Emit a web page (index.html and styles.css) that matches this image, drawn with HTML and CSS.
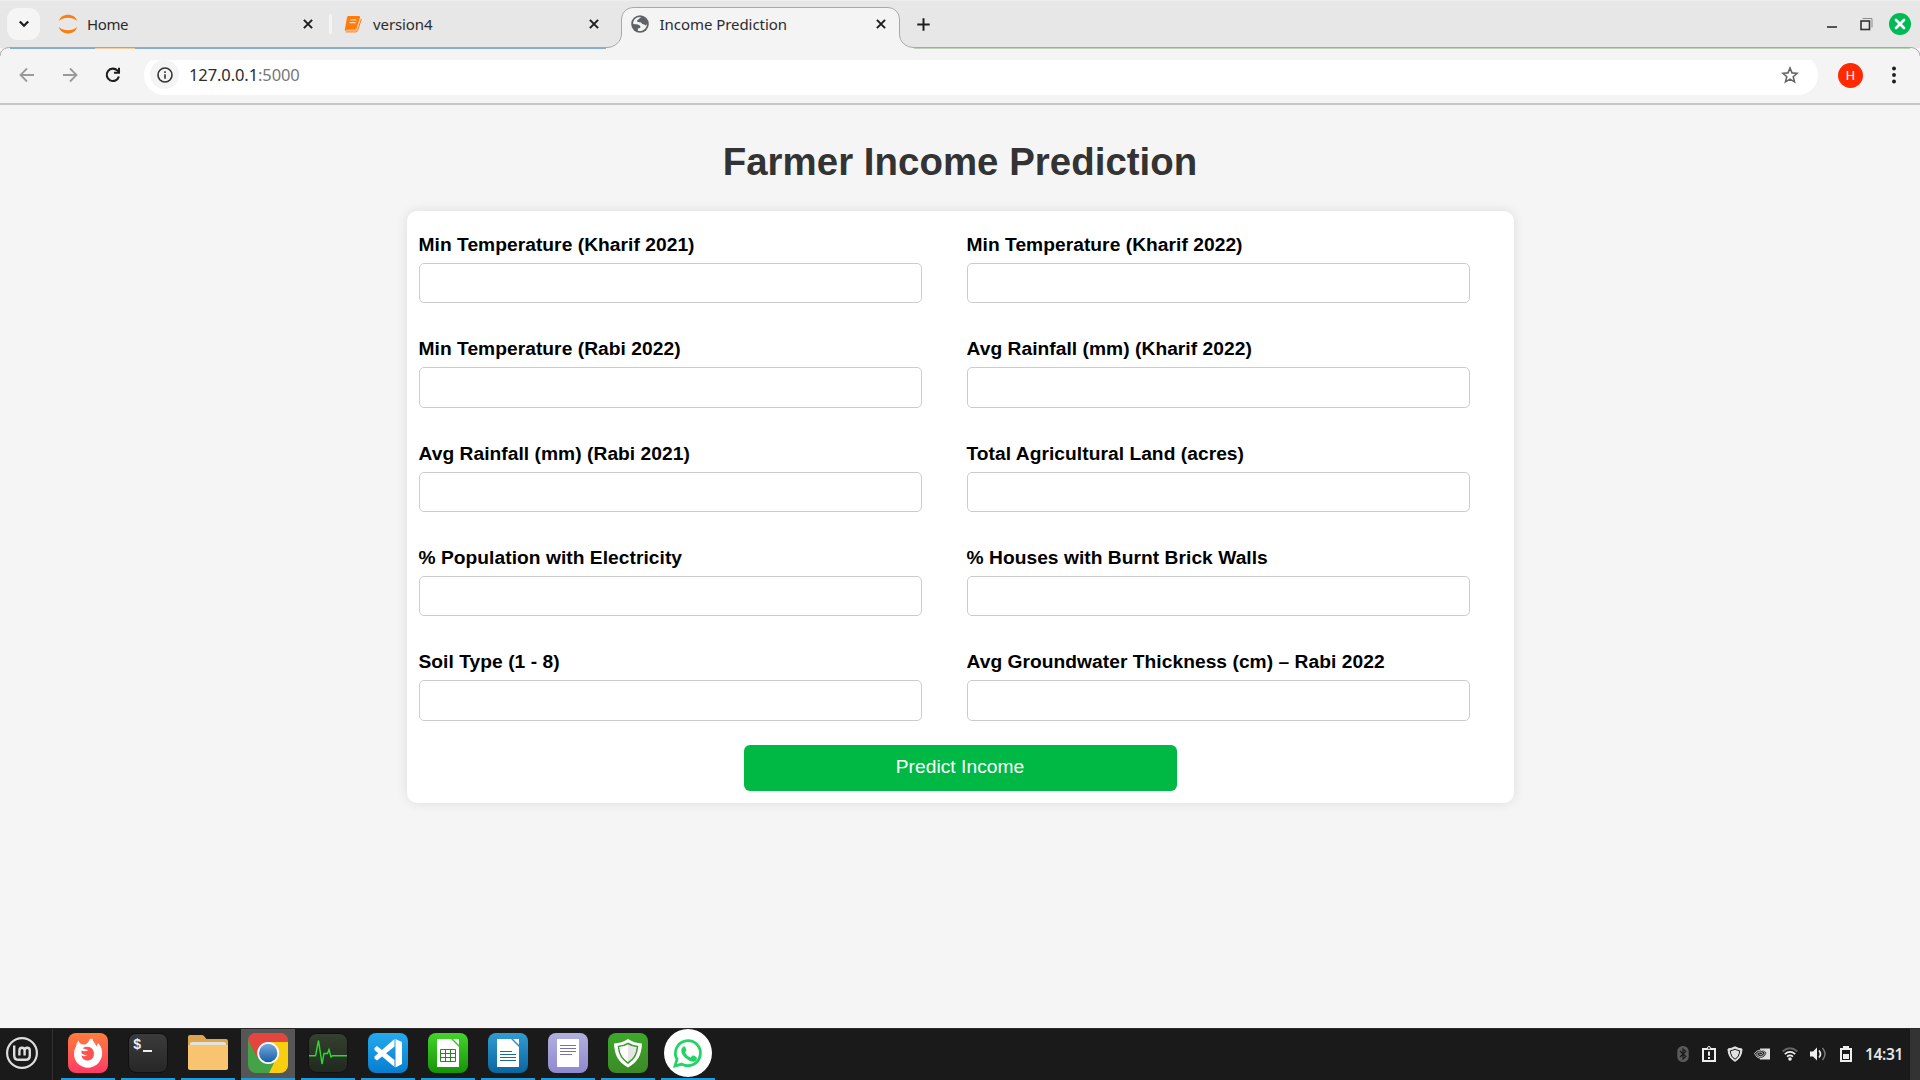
FILE: index.html
```html
<!DOCTYPE html>
<html lang="en">
<head>
<meta charset="utf-8">
<title>Income Prediction</title>
<link rel="stylesheet" href="styles.css">
</head>
<body>
<div class="desktop">
  <header class="tabstrip">
    <svg class="strip-outline" width="1920" height="60" viewBox="0 0 1920 60" fill="none">
      <path d="M0 56C.5 50 4 47.5 11 47.5H607C615 47.5 621.500 41 621.500 34V20C621.500 12 627 7.500 634 7.500H887C895 7.500 899.500 13 899.500 20V34C899.500 42 906 47.500 914 47.500H1910C1916 47.500 1919.500 51 1920 56V60H0Z" fill="#f4f4f4"/>
      <path d="M10 48.500H606" stroke="#86aec9"/>
      <path d="M95 48.500H135" stroke="#f0cfa0"/>
      <path d="M914 48.500H1910" stroke="#bdd0b8"/>
      <path d="M0 56C.5 50 4 47.500 11 47.500H607C615 47.500 621.500 41 621.500 34V20C621.500 12 627 7.500 634 7.500H887C895 7.500 899.500 13 899.500 20V34C899.500 42 906 47.500 914 47.500H1910C1916 47.500 1919.500 51 1920 56" stroke="#a8a8a8"/>
    </svg>
    <button class="tab-search"><svg width="12" height="8" viewBox="0 0 12 8"><path d="M1.800 1.500 6 5.700 10.200 1.500" fill="none" stroke="#1e1e1e" stroke-width="2.300"/></svg></button>
    <div class="tab tab-home">
      <svg width="20" height="20" viewBox="0 0 20 20" fill="#ff7b0a"><path d="M.8 7C3-1.500 17-1.500 19.200 7C14 2.700 6 2.700 .8 7Z"/><path d="M.8 13C3 21.500 17 21.500 19.200 13C14 17.300 6 17.300 .8 13Z"/></svg>
      <span class="tab-title title-home">Home</span>
      <svg class="close" width="10" height="10" viewBox="0 0 10 10"><path d="M.9.9 9.100 9.100M9.100.9.9 9.100" stroke="#1e1e1e" stroke-width="2"/></svg>
    </div>
    <i class="tab-divider"></i>
    <div class="tab tab-notebook">
      <svg width="18" height="18" viewBox="0 0 18 18"><path d="M4.200 1H15q1.400 0 1 1.500L13 14.500q-.4 1.500-2 1.500H2Q.4 16 .9 14L3 2.500Q3.200 1 4.200 1Z" fill="#ff7b0a"/><path d="M6.300 4.800h6M5.600 7.600h6" stroke="#ffd9b8" stroke-width="1.300"/><path d="M2 15.200h9.300q1.100 0 1.500-1.400L16.300 3" fill="none" stroke="#ffd1a5" stroke-width="1"/><path d="M1.800 16.900h10q1.500 0 1.900-1.500L17.300 4" fill="none" stroke="#ff7b0a"/></svg>
      <span class="tab-title title-notebook">version4</span>
      <svg class="close" width="10" height="10" viewBox="0 0 10 10"><path d="M.9.9 9.100 9.100M9.100.9.9 9.100" stroke="#1e1e1e" stroke-width="2"/></svg>
    </div>
    <div class="tab tab-active">
      <svg width="18" height="18" viewBox="0 0 18 18"><circle cx="9" cy="9" r="8.800" fill="#5f6368"/><path d="M10.600 2.200C8.500 2.300 8.400 4 7.400 4.500C6 5 5.700 5.700 6.500 6.700C7.300 7.600 10 6.500 10.700 8.200C11 9.500 13 8.700 14.500 10.500C15.500 9.800 16 9 16 8.500C16.200 13.500 11.500 17 7 15.800L6.800 13.600C8.800 13.500 9.800 12.700 9.300 11.300C8.600 9.600 6 9 2.200 8.900C1.800 4.500 6 1.200 10.600 2.200Z" fill="#f4f4f4"/></svg>
      <span class="tab-title title-active">Income Prediction</span>
      <svg class="close" width="10" height="10" viewBox="0 0 10 10"><path d="M.9.9 9.100 9.100M9.100.9.9 9.100" stroke="#1e1e1e" stroke-width="2"/></svg>
    </div>
    <svg class="new-tab" width="13" height="13" viewBox="0 0 13 13"><path d="M6.500.3V12.700M.3 6.500H12.700" stroke="#1e1e1e" stroke-width="2"/></svg>
    <div class="window-controls">
      <svg width="10" height="24" viewBox="0 0 10 24"><path d="M0 15h10" stroke="#555" stroke-width="2"/></svg>
      <svg width="13" height="24" viewBox="0 0 13 24" fill="none"><path d="M2.500 6.500h9.500v9" stroke="#8b8b8b"/><rect x="1" y="9" width="8.500" height="8.500" stroke="#333" stroke-width="1.600"/></svg>
      <svg width="22" height="22" viewBox="0 0 22 22"><circle cx="11" cy="11" r="11" fill="#00bb55"/><path d="M7 7l8 8M15 7l-8 8" stroke="#fff" stroke-width="2.700" stroke-linecap="round"/></svg>
    </div>
  </header>

  <nav class="toolbar">
    <svg class="nav-back" width="16" height="16" viewBox="0 0 16 16" fill="none" stroke="#9a9a9a" stroke-width="1.800"><path d="M15 8H2M8 1.500 1.500 8 8 14.500"/></svg>
    <svg class="nav-forward" width="16" height="16" viewBox="0 0 16 16" fill="none" stroke="#9a9a9a" stroke-width="1.800"><path d="M1 8H14M8 1.500 14.500 8 8 14.500"/></svg>
    <svg class="nav-reload" width="16" height="16" viewBox="0 0 16 16"><path d="M13.900 9.500A6.200 6.200 0 1 1 12.500 3.600L14.500 5.600" fill="none" stroke="#1e1e1e" stroke-width="2.100"/><path d="M15 .7V6.700H9V4.700H13V.7Z" fill="#1e1e1e"/></svg>
    <div class="omnibox">
      <span class="site-info"><svg width="16" height="16" viewBox="0 0 16 16"><circle cx="8" cy="8" r="7" fill="none" stroke="#333" stroke-width="1.600"/><path d="M8 7.200V11.700M8 4.200V5.900" stroke="#333" stroke-width="1.600"/></svg></span>
      <span class="url">127.0.0.1<span class="port">:5000</span></span>
      <svg class="bookmark" width="18" height="18" viewBox="0 0 18 18"><path d="M9 2 11 6.900 16.200 7.300 12.200 10.700 13.500 15.900 9 13.100 4.500 15.900 5.800 10.700 1.800 7.300 7 6.900Z" fill="none" stroke="#666" stroke-width="1.600"/></svg>
    </div>
    <span class="avatar">H</span>
    <svg class="kebab" width="4" height="18" viewBox="0 0 4 18" fill="#1e1e1e"><circle cx="2" cy="2.500" r="1.950"/><circle cx="2" cy="9" r="1.950"/><circle cx="2" cy="15.500" r="1.950"/></svg>
  </nav>

  <main class="page">
    <h1 class="page-title">Farmer Income Prediction</h1>
    <form class="card">
      <div class="fields">
        <div class="field"><label for="f1">Min Temperature (Kharif 2021)</label><input id="f1" type="text"></div>
        <div class="field"><label for="f2">Min Temperature (Kharif 2022)</label><input id="f2" type="text"></div>
        <div class="field"><label for="f3">Min Temperature (Rabi 2022)</label><input id="f3" type="text"></div>
        <div class="field"><label for="f4">Avg Rainfall (mm) (Kharif 2022)</label><input id="f4" type="text"></div>
        <div class="field"><label for="f5">Avg Rainfall (mm) (Rabi 2021)</label><input id="f5" type="text"></div>
        <div class="field"><label for="f6">Total Agricultural Land (acres)</label><input id="f6" type="text"></div>
        <div class="field"><label for="f7">% Population with Electricity</label><input id="f7" type="text"></div>
        <div class="field"><label for="f8">% Houses with Burnt Brick Walls</label><input id="f8" type="text"></div>
        <div class="field"><label for="f9">Soil Type (1 - 8)</label><input id="f9" type="text"></div>
        <div class="field"><label for="f10">Avg Groundwater Thickness (cm) – Rabi 2022</label><input id="f10" type="text"></div>
      </div>
      <button class="submit" type="button">Predict Income</button>
    </form>
  </main>

  <footer class="taskbar">
    <div class="start">
      <svg width="32" height="32" viewBox="0 0 32 32" fill="none" stroke="#ddd"><circle cx="16" cy="16" r="14.900" stroke-width="2.200"/><path d="M8.200 8.500V18.500Q8.200 22.800 12.500 22.800H19.500Q23.800 22.800 23.800 18.500V13.500Q23.800 10.700 21.200 10.700T18.600 13.500V18.500M18.600 13.500Q18.600 10.700 16 10.700T13.400 13.500V18.500" stroke-width="2.400"/></svg>
    </div>
    <div class="apps">
      <div class="app"><svg width="40" height="40" viewBox="0 0 40 40">
        <defs><linearGradient id="ff" x2="0" y2="1"><stop stop-color="#ff7d3c"/><stop offset="1" stop-color="#ff3b64"/></linearGradient></defs>
        <rect width="40" height="40" rx="8" fill="url(#ff)"/><path d="M8.200 13Q8.500 9.500 10.500 7.500Q11 10 13.500 11.300L17.500 11.500Q21 9.500 21.800 6Q24 5.500 24.500 5.500Q24.500 8.500 27 10.500L28.500 13.500L30 10Q35 15 34 22.500C32.500 30 26.500 34.700 20 34.700C12 34.700 6 28.500 6 21Q6 16.500 8.200 13Z" fill="#fff"/><path d="M13.500 17.500Q16 19 20 17.500Q20 16.800 17 16L14.500 15.200Q19 12.500 23 14.800C28 18.500 26.500 27.500 20 27.500C16.500 27.500 13.700 25.500 13.500 22.500Q16.500 24 19.500 22Q15 22 13.500 20Z" fill="#ff514f"/></svg></div>
      <div class="app"><span class="terminal">$<i class="caret"></i></span></div>
      <div class="app"><svg width="40" height="40" viewBox="0 0 40 40"><path d="M0 4Q0 2 2 2H14Q15 2 16 3L18.500 6H38Q40 6 40 8V20H0Z" fill="#dca54e"/><path d="M2 15V11Q2 9 4 9H36Q38 9 38 11V15Z" fill="#e4e2dd"/><path d="M0 12H40V35Q40 37 38 37H2Q0 37 0 35Z" fill="#f9c470"/></svg></div>
      <div class="app app-current"><svg width="40" height="40" viewBox="0 0 40 40">
        <defs><clipPath id="cc"><rect width="40" height="40" rx="8"/></clipPath><linearGradient id="cb" x2="0" y2="1"><stop stop-color="#75a9df"/><stop offset="1" stop-color="#185fa5"/></linearGradient></defs>
        <g clip-path="url(#cc)"><path d="M0 0H40V40H0Z" fill="#45a347"/><path d="M0 0H40V9H20L10 26L0 7Z" fill="#e4453e"/><path d="M20 9H40V40H21L31 20Z" fill="#f9ce10"/></g><circle cx="20.200" cy="20" r="11" fill="#fff"/><circle cx="20.200" cy="20" r="9.200" fill="url(#cb)"/></svg></div>
      <div class="app"><svg width="40" height="40" viewBox="0 0 40 40"><defs><linearGradient id="mon" x2="0" y2="1"><stop stop-color="#35402f"/><stop offset="1" stop-color="#20291f"/></linearGradient></defs><rect x=".5" y=".5" width="39" height="39" rx="8" fill="url(#mon)" stroke="#111"/><path d="M1 22.700H7.500L10.500 7.500L14 31L16 20.500H19.500L21 16.500L23 24L24.500 22.700H39" fill="none" stroke="#29de2d" stroke-width="1.400"/></svg></div>
      <div class="app"><svg width="40" height="40" viewBox="0 0 40 40"><defs><linearGradient id="vs" x2="0" y2="1"><stop stop-color="#24aaee"/><stop offset="1" stop-color="#087dd0"/></linearGradient></defs><rect width="40" height="40" rx="8" fill="url(#vs)"/><path d="M27.500 6 34 9V31L27.500 34.500ZM26.500 6 6.500 23.500V25.500L9 27.500L26.500 13.500ZM9 13 6.500 15V17L26.500 34V27Z" fill="#fff"/></svg></div>
      <div class="app"><svg width="40" height="40" viewBox="0 0 40 40"><defs><linearGradient id="ca" x2="0" y2="1"><stop stop-color="#43d52b"/><stop offset="1" stop-color="#159408"/></linearGradient></defs><rect width="40" height="40" rx="8" fill="url(#ca)"/><path d="M9 6H23L31 14V34H9Z" fill="#fff"/><path d="M25 6H31V12Z" fill="#fff"/><path d="M12.500 16.500H27.500V28.500H12.500ZM12.500 20.500H27.500M12.500 24.500H27.500M17.500 16.500V28.500M22.500 16.500V28.500" fill="none" stroke="#238c17"/></svg></div>
      <div class="app"><svg width="40" height="40" viewBox="0 0 40 40"><defs><linearGradient id="wr" x2="0" y2="1"><stop stop-color="#329bd2"/><stop offset="1" stop-color="#0966a1"/></linearGradient></defs><rect width="40" height="40" rx="8" fill="url(#wr)"/><path d="M9 6H23L31 14V34H9Z" fill="#fff"/><path d="M25 6H31V12Z" fill="#fff"/><path d="M12 18.500H24M12 21.500H28M12 24.500H28M12 27.500H28" stroke="#176ba0"/></svg></div>
      <div class="app"><svg width="40" height="40" viewBox="0 0 40 40"><defs><linearGradient id="te" x2="0" y2="1"><stop stop-color="#b2afe0"/><stop offset="1" stop-color="#8e89ce"/></linearGradient></defs><rect width="40" height="40" rx="8" fill="url(#te)"/><path d="M9 6H31V34H9Z" fill="#fff"/><path d="M12 12.500H28M12 15.500H28M12 18.500H28M12 21.500H24" stroke="#7772a4"/></svg></div>
      <div class="app"><svg width="40" height="40" viewBox="0 0 40 40"><defs><linearGradient id="sh" x2="0" y2="1"><stop stop-color="#3ba92a"/><stop offset="1" stop-color="#3d8a27"/></linearGradient></defs><rect width="40" height="40" rx="8" fill="url(#sh)"/><path d="M20 6Q26 10 34 10.500C33.500 22 30 29 20 34.500C10 29 6.500 22 6 10.500Q14 10 20 6Z" fill="#fff"/><path d="M20 10.500Q24 13 29.500 13.500C29 21.500 26.500 26 20 30C13.500 26 11 21.500 10.500 13.500Q16 13 20 10.500Z" fill="#e6e6e6" stroke="#3c9929" stroke-width="1.500"/><path d="M20 11.500V29Q14 25 12 18L11.500 14Q16 13.500 20 11.500Z" fill="#fff"/></svg></div>
      <div class="app"><svg width="48" height="48" viewBox="0 0 48 48"><circle cx="24" cy="24" r="24" fill="#fff"/><path d="M11 37 13 30.300A12.500 12.500 0 1 1 17.800 35.100Z" fill="none" stroke="#22d366" stroke-width="2.800"/><path d="M19.500 17.500q1.200-.5 1.700.6l1.200 2.900q.2.700-1.400 2.400q2 3.800 5.700 5.200l1.600-1.900q.5-.6 1.200-.2l3 1.500q1.300 3-2 4.500c-3.500 1.200-10.500-3.500-12.700-8.300c-1.100-2.700-.4-5.300 1.700-6.700Z" fill="#22d366"/></svg></div>
    </div>
    <div class="tray">
      <span class="tray-item"><svg width="12" height="16" viewBox="0 0 12 16"><rect x=".3" width="11.400" height="16" rx="5.500" fill="#5a5a5a"/><path d="M3 5 8.800 10.500 6 13V3L8.800 5.500 3 11" fill="none" stroke="#1a1a1a" stroke-width="1.200"/></svg></span>
      <span class="tray-item"><svg width="14" height="16" viewBox="0 0 14 16"><path d="M1 3H13V15H1Z" fill="none" stroke="#eee" stroke-width="2"/><circle cx="7" cy="2" r="1.500" fill="#1a1a1a" stroke="#eee"/><path d="M7 5.500V9.800M7 11V13" stroke="#eee" stroke-width="2"/></svg></span>
      <span class="tray-item"><svg width="16" height="16" viewBox="0 0 16 16"><path d="M8 .8Q11 2.500 15 3C14.700 9 12.500 13 8 15.300C3.500 13 1.300 9 1 3Q5 2.500 8 .8Z" fill="#e0e0e0" stroke="#e8e8e8"/><path d="M8 3.200Q10 4.400 12.700 4.800C12.300 9 11 11.500 8 13.200C5 11.500 3.700 9 3.300 4.800Q6 4.400 8 3.200Z" fill="#e0e0e0" stroke="#1a1a1a"/></svg></span>
      <span class="tray-item wide"><svg class="gpu" width="16" height="12" viewBox="0 0 16 12"><path d="M6 .5H16V11.500H6Z" fill="#ddd"/><path d="M0 5.800Q3 1.500 7 1.700Q10.500 2 12.500 5Q10 10 6.500 9.800Q2.500 9.500 0 5.800Z" fill="#1a1a1a"/><path d="M.4 5.500Q3 2 6.500 2.200Q9.500 2.500 11.300 5Q9 9 6.300 8.800Q3.700 8.500 2.700 5.700Q4.700 3.700 6.500 4Q8 4.300 8.800 5.300Q7.500 7 6.300 6.900L5.300 5.700M.4 5.500Q2.500 10 6.500 10.500" fill="none" stroke="#ddd" stroke-width=".9"/></svg></span>
      <span class="tray-item wide"><svg width="16" height="14" viewBox="0 0 16 14" fill="none" stroke-width="1.700"><path d="M.6 4.500Q8-2 15.400 4.500" stroke="#666"/><path d="M2.800 7.200Q8 2.700 13.200 7.200M5 9.700Q8 7.200 11 9.700" stroke="#eee"/><circle cx="8" cy="12" r="1.800" fill="#eee"/></svg></span>
      <span class="tray-item wide"><svg width="16" height="14" viewBox="0 0 16 14" fill="none"><path d="M0 4.500H3L7 .5V13.500L3 9.500H0Z" fill="#eee"/><path d="M9 3.500Q12 7 9 10.500" stroke="#eee" stroke-width="1.700"/><path d="M12.500 1Q17.500 7 12.500 13" stroke="#777" stroke-width="1.500"/></svg></span>
      <span class="tray-item wide"><svg width="12" height="16" viewBox="0 0 12 16"><path d="M3 0H9V2H12V16H0V2H3Z" fill="#eee"/><path d="M2 4H10V14H2Z" fill="#1a1a1a"/><path d="M3 8H9V13H3Z" fill="#eee"/></svg></span>
      <span class="clock">14:31</span>
      <i class="show-desktop"></i>
    </div>
  </footer>
</div>
</body>
</html>
```
FILE: styles.css
```css
* { box-sizing: border-box; }
body { margin: 0; }
svg { display: block; flex: none; }

.desktop {
  display: flex;
  flex-direction: column;
  width: 1920px;
  height: 1080px;
  overflow: hidden;
  background: #f4f4f4;
  font-family: "Noto Sans", sans-serif;
}

/* Tab strip */
.tabstrip {
  position: relative;
  display: flex;
  align-items: flex-start;
  flex: none;
  height: 48px;
  background: #e7e7e7;
  border-top: 1px solid #eee;
}
.strip-outline { position: absolute; left: 0; top: -1px; }
.tabstrip > :not(.strip-outline) { position: relative; }
.tab-search {
  display: flex;
  align-items: center;
  justify-content: center;
  width: 33px;
  height: 32px;
  margin: 7px 0 0 7px;
  padding: 0;
  border: 0;
  border-radius: 11px;
  background: #f5f5f5;
}
.tab { display: flex; align-items: center; height: 46px; }
.tab .close { margin-left: auto; }
.tab-home { width: 255px; margin-left: 18px; }
.tab-divider { width: 3px; height: 20px; margin: 13px 12px 0 16px; border-radius: 2px; background: #f4f4f4; }
.tab-notebook { width: 255px; }
.tab-active { width: 255px; margin-left: 32px; }
.tab-title { color: #2b2b2b; font-size: 15px; line-height: 20px; white-space: nowrap; }
.title-home { margin-left: 9px; letter-spacing: -0.4px; }
.title-notebook { margin-left: 11px; letter-spacing: -0.1px; }
.title-active { margin-left: 10.5px; letter-spacing: -0.05px; }
.new-tab { margin: 17px 0 0 31px; }
.window-controls {
  display: flex;
  align-items: center;
  height: 46px;
  margin-left: auto;
  padding-right: 9px;
}
.window-controls svg:nth-child(2) { margin: 0 16px 0 23px; }

/* Address bar */
.toolbar {
  display: flex;
  align-items: center;
  flex: none;
  height: 57px;
  padding: 0 24px 2px 19px;
  border-bottom: 2px solid #c6c6c6;
}
.nav-forward { margin-left: 27px; }
.nav-reload { margin-left: 27px; }
.omnibox {
  display: flex;
  align-items: center;
  width: 1674px;
  height: 40px;
  margin-left: 23px;
  padding: 0 19px 0 6px;
  border-radius: 20px;
  background: #fff;
}
.site-info {
  display: flex;
  align-items: center;
  justify-content: center;
  width: 29px;
  height: 29px;
  border-radius: 50%;
  background: #f4f4f4;
}
.url { margin-left: 10px; color: #2b2b2b; font-size: 16.5px; letter-spacing: -0.1px; }
.port { color: #777; }
.bookmark { margin-left: auto; }
.avatar {
  width: 25px;
  height: 25px;
  margin: 2px 0 0 20px;
  border-radius: 50%;
  background: #ff2a00;
  color: #fff;
  font: 13px/25px Roboto, sans-serif;
  text-align: center;
}
.kebab { margin-left: auto; }

/* Web page */
.page { flex: 1; background: #f5f5f5; font-family: "Liberation Sans", sans-serif; }
.page-title {
  margin: 0;
  padding: 34px 0 27px;
  color: #333;
  font-size: 38.4px;
  line-height: 45px;
  letter-spacing: 0.04px;
  text-align: center;
}
.card {
  width: 1107px;
  height: 592px;
  margin: 0 auto;
  padding: 22px 12px 12px;
  border-radius: 10px;
  background: #fff;
  box-shadow: 0 0 12px rgba(0, 0, 0, 0.1);
}
.fields {
  display: grid;
  grid-template-columns: 503px 503px;
  grid-auto-rows: 104.3px;
  column-gap: 45px;
}
.field label {
  display: block;
  height: 30px;
  color: #000;
  font-size: 19.2px;
  font-weight: bold;
  line-height: 24px;
  letter-spacing: 0.045px;
}
.field input {
  display: block;
  width: 100%;
  height: 40.4px;
  padding: 0 10px;
  border: 1px solid #ccc;
  border-radius: 5px;
  background: #fff;
}
.submit {
  display: block;
  width: 433px;
  height: 46px;
  margin: -9.5px auto 0;
  padding: 0 0 1px;
  border: 0;
  border-radius: 6px;
  background: #00b944;
  color: #fff;
  font: 19.2px "Liberation Sans", sans-serif;
  letter-spacing: 0.05px;
}

/* Desktop panel */
.taskbar {
  display: flex;
  flex: none;
  height: 52px;
  background: #1a1a1a;
  border-top: 1px solid #292929;
}
.start {
  display: flex;
  align-items: center;
  width: 53px;
  padding: 0 0 3px 6px;
  border-right: 1px solid #303030;
}
.apps { display: flex; gap: 6px; margin-left: 8px; }
.app {
  display: flex;
  align-items: center;
  justify-content: center;
  width: 54px;
  height: 51px;
  padding-bottom: 1px;
  border-bottom: 2px solid #209bde;
}
.app-current { background: #565656; }
.terminal {
  display: flex;
  width: 40px;
  height: 40px;
  padding: 1px 4px;
  border: 1px solid #101010;
  border-radius: 8px;
  background: linear-gradient(#3b3b3b, #272727);
  color: #eee;
  font: bold 14px/21px "Liberation Mono", monospace;
}
.caret { width: 9px; height: 2px; margin: 15px 0 0 2px; background: #eee; }
.tray { display: flex; align-items: center; margin-left: auto; }
.tray-item { display: flex; justify-content: center; width: 26px; padding-bottom: 2px; }
.tray-item.wide { width: 28px; }
.gpu { margin-left: -1px; }
.clock {
  width: 50px;
  padding: 0 0 2px 5px;
  color: #e6e6e6;
  font-size: 15.5px;
  font-weight: 600;
  letter-spacing: -0.35px;
}
.show-desktop { align-self: stretch; width: 10px; background: #333; }
```
